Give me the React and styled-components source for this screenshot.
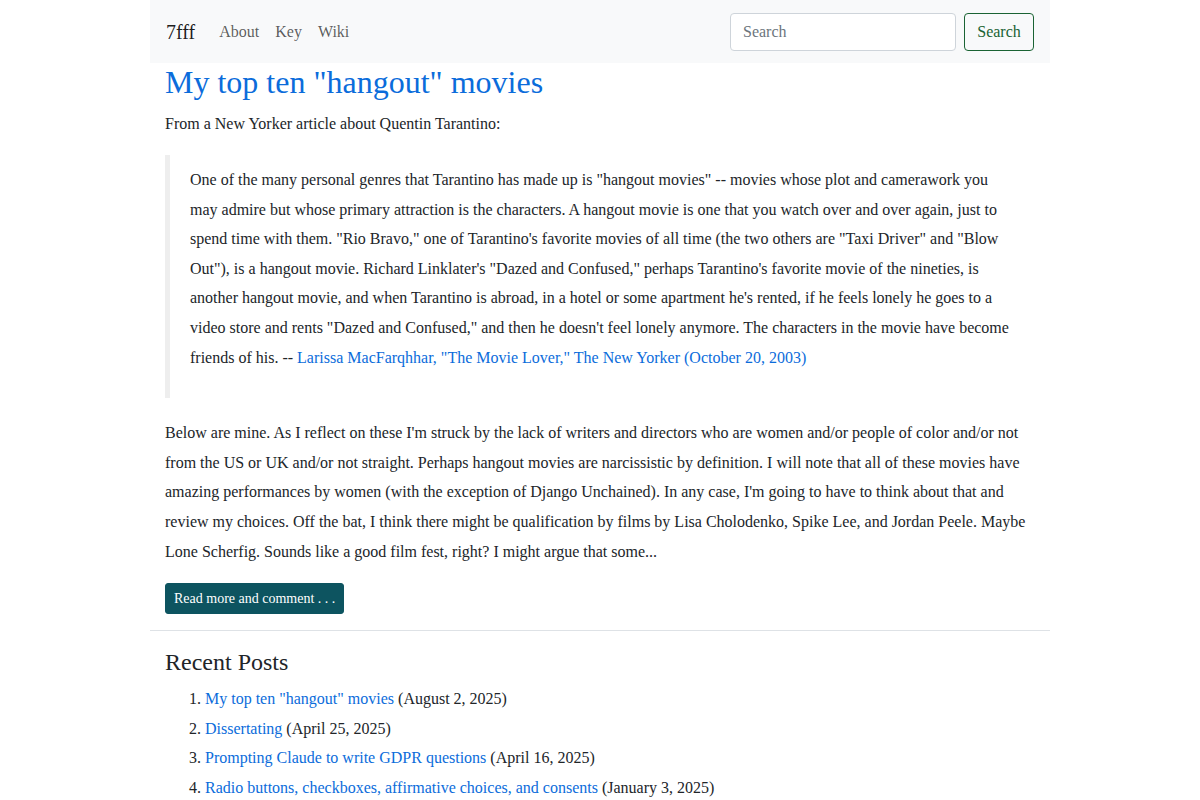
import React from "react";
import styled, { createGlobalStyle } from "styled-components";

const Global = createGlobalStyle`
  * { box-sizing: border-box; }
  html, body { margin: 0; padding: 0; background: #fff; }
  body {
    font-family: "Liberation Serif", "Times New Roman", serif;
    font-size: 16px;
    color: #212529;
    line-height: 1.5;
  }
`;

const Container = styled.div`
  width: 900px;
  margin: 0 auto;
`;

const Navbar = styled.nav`
  display: flex;
  align-items: center;
  height: 63px;
  padding: 0 16px;
  background: #f8f9fa;
`;

const Brand = styled.a`
  font-size: 20px;
  color: rgba(0, 0, 0, 0.9);
  text-decoration: none;
  margin-right: 16px;
`;

const NavLinks = styled.div`
  display: flex;
  flex: 1;
`;

const NavLink = styled.a`
  padding: 8px;
  color: rgba(0, 0, 0, 0.65);
  text-decoration: none;
`;

const SearchForm = styled.form`
  display: flex;
  gap: 8px;
`;

const SearchInput = styled.input`
  width: 226px;
  height: 38px;
  padding: 6px 12px;
  border: 1px solid #ced4da;
  border-radius: 4px;
  font-family: inherit;
  font-size: 16px;
  color: #212529;
  background: #fff;
  &::placeholder { color: #6c757d; }
`;

const SearchButton = styled.button`
  width: 70px;
  height: 38px;
  border: 1px solid #1a6333;
  border-radius: 4px;
  background: transparent;
  color: #1a6333;
  font-family: inherit;
  font-size: 16px;
  padding: 0;
`;

const Main = styled.main`
  padding: 0 15px;
`;

const Title = styled.h2`
  margin: 0 0 8px;
  font-size: 32px;
  font-weight: 400;
  line-height: 1.2;
  a { color: #0b6cdb; text-decoration: none; }
`;

const Para = styled.p`
  margin: 0 0 16px;
  line-height: 1.85;
`;

const Quote = styled.blockquote`
  margin: 0 0 20px;
  padding: 10px 20px 10px 20px;
  border-left: 5px solid #eee;
`;

const Link = styled.a`
  color: #0b6cdb;
  text-decoration: none;
`;

const ReadMore = styled.a`
  display: inline-block;
  margin-top: 1px;
  padding: 4px 8px;
  font-size: 14px;
  line-height: 1.5;
  color: #fff;
  background: #0d5460;
  border: 1px solid #0d5460;
  border-radius: 3px;
  text-decoration: none;
`;

const Rule = styled.hr`
  margin: 16px 0 17px;
  border: 0;
  border-top: 1px solid #dee2e6;
`;

const SectionTitle = styled.h3`
  margin: 0 0 7px;
  padding: 0 15px;
  font-size: 24px;
  font-weight: 400;
  line-height: 1.2;
`;

const PostList = styled.ol`
  margin: 0;
  padding: 0 15px 0 55px;
  li { line-height: 1.85; }
`;

const posts = [
  ["My top ten \"hangout\" movies", "August 2, 2025"],
  ["Dissertating", "April 25, 2025"],
  ["Prompting Claude to write GDPR questions", "April 16, 2025"],
  ["Radio buttons, checkboxes, affirmative choices, and consents", "January 3, 2025"],
];

export default function App() {
  return (
    <Container>
      <Global />
      <Navbar>
        <Brand href="#">7fff</Brand>
        <NavLinks>
          <NavLink href="#">About</NavLink>
          <NavLink href="#">Key</NavLink>
          <NavLink href="#">Wiki</NavLink>
        </NavLinks>
        <SearchForm onSubmit={(e) => e.preventDefault()}>
          <SearchInput placeholder="Search" />
          <SearchButton type="submit">Search</SearchButton>
        </SearchForm>
      </Navbar>
      <Main>
        <Title>
          <a href="#">My top ten "hangout" movies</a>
        </Title>
        <Para>From a New Yorker article about Quentin Tarantino:</Para>
        <Quote>
          <Para>
            One of the many personal genres that Tarantino has made up is "hangout movies" -- movies whose plot and camerawork you may admire but whose primary attraction is the characters. A hangout movie is one that you watch over and over again, just to spend time with them. "Rio Bravo," one of Tarantino's favorite movies of all time (the two others are "Taxi Driver" and "Blow Out"), is a hangout movie. Richard Linklater's "Dazed and Confused," perhaps Tarantino's favorite movie of the nineties, is another hangout movie, and when Tarantino is abroad, in a hotel or some apartment he's rented, if he feels lonely he goes to a video store and rents "Dazed and Confused," and then he doesn't feel lonely anymore. The characters in the movie have become friends of his. -- <Link href="#">Larissa MacFarqhhar, "The Movie Lover," The New Yorker (October 20, 2003)</Link>
          </Para>
        </Quote>
        <Para>
          Below are mine. As I reflect on these I'm struck by the lack of writers and directors who are women and/or people of color and/or not from the US or UK and/or not straight. Perhaps hangout movies are narcissistic by definition. I will note that all of these movies have amazing performances by women (with the exception of Django Unchained). In any case, I'm going to have to think about that and review my choices. Off the bat, I think there might be qualification by films by Lisa Cholodenko, Spike Lee, and Jordan Peele. Maybe Lone Scherfig. Sounds like a good film fest, right? I might argue that some...
        </Para>
        <ReadMore href="#">Read more and comment . . .</ReadMore>
      </Main>
      <Rule />
      <SectionTitle>Recent Posts</SectionTitle>
      <PostList>
        {posts.map(([t, d]) => (
          <li key={t}>
            <Link href="#">{t}</Link> ({d})
          </li>
        ))}
      </PostList>
    </Container>
  );
}
